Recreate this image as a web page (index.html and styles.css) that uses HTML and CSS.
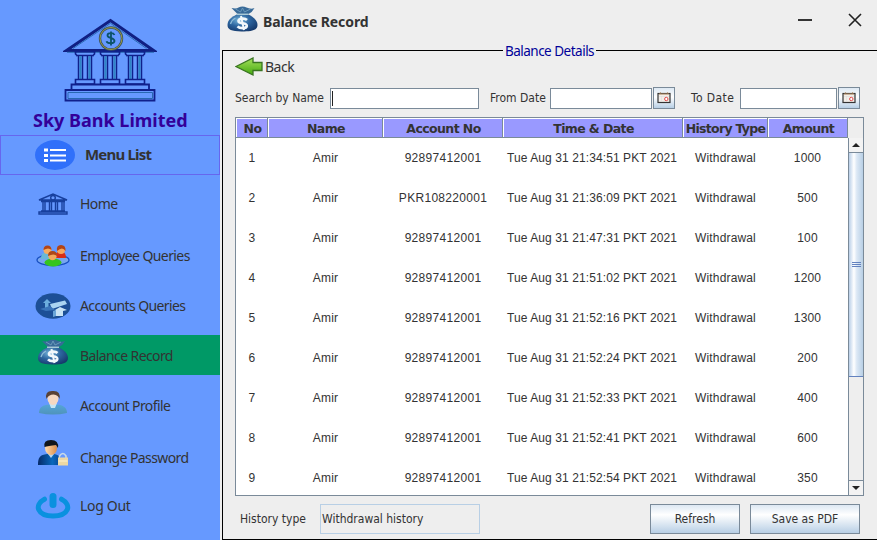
FILE: index.html
```html
<!DOCTYPE html>
<html lang="en">
<head>
<meta charset="utf-8">
<title>Balance Record</title>
<link rel="stylesheet" href="styles.css">
</head>
<body>
<svg width="0" height="0" class="defs" aria-hidden="true">
  <defs>
    <radialGradient id="bag" cx=".4" cy=".35" r=".7"><stop offset="0" stop-color="#79b8dc"/><stop offset=".5" stop-color="#2d659f"/><stop offset="1" stop-color="#163a6c"/></radialGradient>
    <linearGradient id="leaf" x2="0" y2="1"><stop offset="0" stop-color="#a5e05c"/><stop offset="1" stop-color="#43a80f"/></linearGradient>
    <linearGradient id="teal" x2="0" y2="1"><stop offset="0" stop-color="#55a5d8"/><stop offset="1" stop-color="#4f93ba"/></linearGradient>
    <linearGradient id="navy"><stop offset="0" stop-color="#062a69"/><stop offset=".6" stop-color="#0868bc"/><stop offset="1" stop-color="#073e8d"/></linearGradient>
    <linearGradient id="skin"><stop offset="0" stop-color="#ffdcae"/><stop offset="1" stop-color="#d98c48"/></linearGradient>
    <symbol id="moneybag" viewBox="0 0 30 26">
      <path d="M10 8C4 11 0 14 0 19c0 5 4 6 14 6.500 10 0 16-1 16-6.500 0-5-5-8.500-10-11z" fill="url(#bag)"/>
      <path d="M4 2q5 1 7-.5 4-2 8 0 4 2 8 .5-2 4-6 6H10Q7 5 4 2z" fill="#386a98"/>
      <path d="M8 3l5 3 2-4 2 4 6-3" fill="none" stroke="#6f9dbd" stroke-width=".9"/>
      <path d="M9 8.300h12" stroke="#a8c9d6" stroke-width="1.500"/>
      <path d="M19.500 14c-2-2-8-2-8.500.8-.4 3.700 8.800 1.200 8.300 5.200-.5 3-7.300 2.500-9.300.3" fill="none" stroke="#f2f8fc" stroke-width="2.600"/>
      <path d="M13.500 10l3 14" stroke="#f2f8fc" stroke-width="2"/>
      <path d="M3 18q1-4 5-6" fill="none" stroke="#8fbcd8" stroke-width="1.300"/>
    </symbol>
    <symbol id="calendar" viewBox="0 0 14 12">
      <rect x="1" y="1.500" width="12" height="9" fill="#f3eee8" stroke="#333" stroke-width="1.200"/>
      <path d="M2 2h10M3 .8h1M10 .8h1" stroke="#b48d65"/>
      <path d="M2 4.500h10M4.500 4v6" stroke="#ddd" stroke-width=".6"/>
      <circle cx="9.300" cy="7" r="1.700" fill="#fff" stroke="#e34b4b"/>
    </symbol>
    <symbol id="column" viewBox="0 0 22 34" overflow="visible">
      <path d="M.5 .8h21M2 4.500h18M1.500 0v3l2 2M20.500 0v3l-2 2" stroke="#10208c" stroke-width="1.600"/>
      <path d="M4.500 5v23M17.500 5v23M8.500 5v23M13.500 5v23" stroke="#10208c" stroke-width="1.500"/>
      <path d="M6.500 5v23M15.500 5v23" stroke="#2f86c4" stroke-width="2"/>
      <path d="M1.500 28.500h19v4.500h-19z" stroke="#10208c" stroke-width="1.600"/>
    </symbol>
  </defs>
</svg>
<div class="window">
  <nav class="sidebar">
    <svg class="bank" viewBox="0 0 94 86" fill="none" stroke="#10208c" stroke-width="1.800">
      <path d="M3.500 33.500L47.500 3.500l43 30z" stroke="#101f83" stroke-width="3"/>
      <path d="M10 31.500L47.500 6.300l36 25.200M4 35.300h87" stroke="#2b6cb5" stroke-width="1"/>
      <circle cx="48" cy="21.500" r="11" stroke="#3d5360" stroke-width="2.400"/><circle cx="48" cy="21.500" r="11" stroke="#9a9b42" stroke-width="1"/>
      <path d="M51.500 18c-1-2.500-7-2.500-7 .4 0 3 7 2 7 5.500 0 3-7 3-8 .3M48 14.500v14" stroke="#0b5368" stroke-width="1.800"/>
      <use href="#column" x="11" y="34" width="22" height="34"/>
      <use href="#column" x="36" y="34" width="22" height="34"/>
      <use href="#column" x="61" y="34" width="22" height="34"/>
      <path d="M8.500 67.500h77.500V73H8.500zM2.500 73h89v10.500h-89z"/><path d="M5 75.500h84.500v6H5z" stroke="#2868b2" stroke-width="1"/>
    </svg>
    <h1 class="brand"><span>Sky Bank Limited</span></h1>
    <div class="menu-title">
      <svg class="list-icon" viewBox="0 0 40 30"><ellipse cx="20" cy="15" rx="20" ry="15" fill="#3070fa"/><path d="M9 10h4M9 15.500h4M9 20.500h4" stroke="#fff" stroke-width="3"/><path d="M15 10h16M15 15.500h16M15 20.500h16" stroke="#fff" stroke-width="2"/></svg>
      <span>Menu List</span>
    </div>
    <ul class="menu">
      <li><svg class="i-home" viewBox="0 0 30 22" fill="none" stroke="#173f9d" stroke-width="1.400"><path d="M1 7L15 1l14 6zM3 8.500h24"/><circle cx="15" cy="4.800" r="2.300"/><path d="M5 9v9m2-9v9m4.500-9v9m2-9v9m4-9v9m2-9v9m4.500-9v9m2-9v9M3 18h24M1 19h28v2H1z"/></svg><span>Home</span></li>
      <li><svg class="i-team" viewBox="0 0 34 22"><ellipse cx="17" cy="15" rx="16" ry="5.500" fill="#78a6ef" stroke="#174fc0" stroke-width="1.300"/><path d="M5 14c0-6 3-7 7-7s6 2 6 7z" fill="#69b8d8"/><path d="M19 13c0-5 3-7 6-7s5 3 5 7z" fill="#d82e16"/><ellipse cx="17" cy="17.500" rx="8.500" ry="4" fill="#35c51f"/><circle cx="11.500" cy="5" r="4" fill="#f7ac60"/><circle cx="25" cy="5" r="4" fill="#f6a65c"/><path d="M7.500 5q0-4.500 4-4.500t4 4.500q-3-3-8 0zM21 6q-1-6 4-6t4.500 6q-3-5-8.500 0z" fill="#b34416"/><circle cx="16.500" cy="11" r="4.200" fill="#f3aa5d"/><path d="M12 11q0-5 4.500-5t4.500 5q-3-3-9 0z" fill="#ad4819"/></svg><span>Employee Queries</span></li>
      <li><svg class="i-accounts" viewBox="0 0 36 26"><ellipse cx="18" cy="13" rx="17.500" ry="12.800" fill="#1c4f96"/><path d="M8 10l4-4 4 4h-2.500v5H10v-5z" fill="#6caede"/><path d="M15 11l15-3.500 2 3.500-15 5z" fill="#aad4f1"/><path d="M5 16l10-3 5 4-9 1z" fill="#3a75ba"/><path d="M20 17l5-3 7 3-4 1v5h-7z" fill="#c9e3f4"/><path d="M21 17v6l-3 1v-6z" fill="#6ba6d8"/></svg><span>Accounts Queries</span></li>
      <li class="active"><svg class="i-bag"><use href="#moneybag"/></svg><span>Balance Record</span></li>
      <li><svg class="i-user" viewBox="0 0 30 25"><path d="M1 23c0-6 4-8 10-8.500h8c6 .5 10 3 10 8.500q-14 3-28 0z" fill="url(#teal)"/><path d="M11 13h8l-2 5h-4z" fill="#c6e5f4"/><ellipse cx="15" cy="8.500" rx="5.500" ry="6.500" fill="#f5d8c2"/><path d="M8.500 9Q6.500 1 14 1q9-1 7.500 8-1-4-6-4.500-5 0-7 4.500z" fill="#594236"/></svg><span>Account Profile</span></li>
      <li><svg class="i-lock" viewBox="0 0 30 26"><path d="M0 25c0-8 2-10 9-11h7c6 1 8 4 8 11z" fill="url(#navy)"/><path d="M10 14h6l-3 4z" fill="#b7d5f0"/><ellipse cx="13" cy="8" rx="6" ry="7" fill="url(#skin)"/><path d="M6.500 7Q5 0 13 0q8 0 7 8l-2-3Q10 6 6.500 7z" fill="#10151b"/><path d="M21.500 19v-3q3.500-5 6.500 0v3" fill="none" stroke="#c9dae9" stroke-width="1.600"/><rect x="20" y="17.500" width="10" height="8" fill="#edd8a4"/><path d="M20.500 21h9" stroke="#fff2ce"/></svg><span>Change Password</span></li>
      <li><svg class="i-power" viewBox="0 0 36 26" fill="none" stroke="#0a91df" stroke-linecap="round"><path d="M9.500 6.200C-1.500 12 2.500 23 18 23S37.500 12 26.500 6.200" stroke-width="5"/><path d="M18 3.500v8" stroke-width="7"/></svg><span>Log Out</span></li>
    </ul>
  </nav>
  <main class="main">
    <header class="titlebar">
      <svg class="title-bag"><use href="#moneybag"/></svg>
      <h2><span>Balance Record</span></h2>
      <svg class="minimize" viewBox="0 0 14 14"><path d="M0 7h14" stroke="#333" stroke-width="2"/></svg>
      <svg class="close" viewBox="0 0 14 14"><path d="M1 1l12 12M13 1L1 13" stroke="#222" stroke-width="1.600"/></svg>
    </header>
    <fieldset class="panel">
      <legend><span>Balance Details</span></legend>
      <div class="back"><svg viewBox="0 0 28 20"><path d="M1 9.500L18 1v4.500h9v8h-9V18z" fill="url(#leaf)" stroke="#397421" stroke-width="1.300"/></svg><span>Back</span></div>
      <div class="filters">
        <label class="l-search">Search by Name</label><div class="field f-search"><i class="caret"></i></div>
        <label class="l-from">From Date</label><div class="field f-from"></div><button class="cal"><svg><use href="#calendar"/></svg></button>
        <label class="l-to">To Date</label><div class="field f-to"></div><button class="cal"><svg><use href="#calendar"/></svg></button>
      </div>
      <div class="table">
        <div class="grid head"><div>No</div><div>Name</div><div>Account No</div><div>Time &amp; Date</div><div class="tight">History Type</div><div>Amount</div></div>
        <div class="body">
          <div class="rows">
            <div class="grid row"><div>1</div><div>Amir</div><div>92897412001</div><div>Tue Aug 31 21:34:51 PKT 2021</div><div>Withdrawal</div><div>1000</div></div>
            <div class="grid row"><div>2</div><div>Amir</div><div>PKR108220001</div><div>Tue Aug 31 21:36:09 PKT 2021</div><div>Withdrawal</div><div>500</div></div>
            <div class="grid row"><div>3</div><div>Amir</div><div>92897412001</div><div>Tue Aug 31 21:47:31 PKT 2021</div><div>Withdrawal</div><div>100</div></div>
            <div class="grid row"><div>4</div><div>Amir</div><div>92897412001</div><div>Tue Aug 31 21:51:02 PKT 2021</div><div>Withdrawal</div><div>1200</div></div>
            <div class="grid row"><div>5</div><div>Amir</div><div>92897412001</div><div>Tue Aug 31 21:52:16 PKT 2021</div><div>Withdrawal</div><div>1300</div></div>
            <div class="grid row"><div>6</div><div>Amir</div><div>92897412001</div><div>Tue Aug 31 21:52:24 PKT 2021</div><div>Withdrawal</div><div>200</div></div>
            <div class="grid row"><div>7</div><div>Amir</div><div>92897412001</div><div>Tue Aug 31 21:52:33 PKT 2021</div><div>Withdrawal</div><div>400</div></div>
            <div class="grid row"><div>8</div><div>Amir</div><div>92897412001</div><div>Tue Aug 31 21:52:41 PKT 2021</div><div>Withdrawal</div><div>600</div></div>
            <div class="grid row"><div>9</div><div>Amir</div><div>92897412001</div><div>Tue Aug 31 21:52:54 PKT 2021</div><div>Withdrawal</div><div>350</div></div>
          </div>
          <div class="scrollbar">
            <div class="arrow"><svg viewBox="0 0 8 4"><path d="M0 4l4-4 4 4z" fill="#222"/></svg></div>
            <div class="thumb"><i></i><i></i><i></i></div>
            <div class="track"></div>
            <div class="arrow down"><svg viewBox="0 0 8 4"><path d="M0 0l4 4 4-4z" fill="#222"/></svg></div>
          </div>
        </div>
      </div>
      <footer class="footer">
        <label>History type</label><div class="readonly">Withdrawal history</div>
        <button class="btn refresh">Refresh</button><button class="btn save">Save as PDF</button>
      </footer>
    </fieldset>
  </main>
</div>
</body>
</html>
```
FILE: styles.css
```css
* { box-sizing: border-box; }
body { margin: 0; color: #333; font-family: "DejaVu Sans Condensed", "DejaVu Sans", sans-serif; font-stretch: condensed; }
.defs { position: absolute; }
.window { display: flex; width: 877px; height: 540px; overflow: hidden; background: #eee; }
svg { display: block; flex: none; }
span, label { white-space: nowrap; }

.sidebar { width: 220px; flex: none; background: #6699ff; }
.bank { width: 94px; height: 86px; margin: 17px 0 0 63px; }
.brand { margin: 4px 0 0; height: 28px; padding-left: 33px; font: bold 18px/27px "Noto Sans", sans-serif; color: #330099; }
.menu-title { display: flex; align-items: center; height: 40px; border: 1px solid #6666ee; padding-left: 34px; gap: 10px; font: bold 15px/20px "Noto Sans", sans-serif; letter-spacing: -.8px; }
.menu-title span { margin-top: -3px; }
.list-icon { width: 40px; height: 30px; }
.menu { list-style: none; margin: 9px 0 0; padding: 0; }
.menu li { display: grid; grid-template-columns: 35px 1fr; column-gap: 10px; align-items: center; justify-items: center; height: 40px; padding-left: 35px; font: 14px/20px "Noto Sans", sans-serif; letter-spacing: -.6px; }
.menu li span { justify-self: start; }
.menu li:nth-child(2) { margin-top: 12px; }
.menu li:nth-child(3) { margin-top: 10px; }
.menu li:nth-child(4) { margin-top: 9px; }
.menu li:nth-child(5) { margin-top: 11px; }
.menu li:nth-child(6) { margin-top: 12px; }
.menu li:nth-child(7) { margin-top: 8px; letter-spacing: -.3px; }
.menu .active { background: #009966; }
.active span { margin-top: 2px; }
.i-home { width: 30px; height: 22px; }
.i-team { width: 34px; height: 22px; }
.i-accounts, .i-power { width: 36px; height: 26px; }
.i-bag { width: 30px; height: 26px; margin-top: -6px; }
.i-user { width: 30px; height: 25px; margin-top: -8px; }
.i-lock { width: 30px; height: 26px; margin-top: -10px; }

.main { flex: 1; min-width: 0; padding-left: 2px; }
.titlebar { display: flex; align-items: center; height: 42px; padding-left: 5px; }
.title-bag { width: 31px; height: 26px; margin-top: -4px; }
.titlebar h2 { margin: 2px 0 0 5px; flex: 1; font: bold 14px/20px "Noto Sans", sans-serif; letter-spacing: -.1px; }
.minimize { width: 14px; height: 14px; margin: -3px 36px 0 0; }
.close { width: 14px; height: 14px; margin: -3px 15px 0 0; }

.panel { margin: 0; padding: 0 13px 0 12px; border: 1px solid #000; border-right: 0; height: 498px; min-width: 0; }
legend { margin: 0 auto; padding: 0 2px; height: 17px; font: 13.500px/18px "Noto Sans", sans-serif; letter-spacing: -.5px; color: #000099; }
.back { display: flex; align-items: center; height: 15px; gap: 2px; font: 14px/14px "Noto Sans", sans-serif; letter-spacing: -.5px; }
.back svg { width: 28px; height: 20px; }
.filters { display: flex; align-items: center; height: 22px; margin-top: 13px; font-size: 12px; }
.l-search { width: 95px; }
.l-from { width: 60px; margin-left: 11px; }
.l-to { width: 49px; margin-left: 16px; letter-spacing: .4px; }
.field { height: 21px; border: 1px solid #7a8a99; background: #fff; padding: 2px 1px; }
.f-search { width: 149px; }
.f-from { width: 102px; }
.f-to { width: 97px; }
.caret { display: block; width: 1px; height: 15px; background: #222; }
.cal { display: grid; place-items: center; width: 22px; height: 22px; margin: 0 0 0 1px; padding: 0; border: 1px solid #7a8a99; background: linear-gradient(#dde8f3, #fff 45%, #b8cfe5); }
.cal svg { width: 14px; height: 12px; }

.table { width: 629px; height: 379px; margin-top: 8px; border: 1px solid #7a8a99; overflow: hidden; }
.grid { display: grid; grid-template-columns: 32px 115px 120px 180px 85px 80px; }
.head { width: 612px; height: 20px; font: bold 12.500px/21px "DejaVu Sans", sans-serif; letter-spacing: -.6px; }
.head div { background: #9999ff; border: solid #7a8a99; border-width: 0 1px 1px 0; box-shadow: inset 1px 1px #fff; padding-left: 2px; text-align: center; white-space: nowrap; overflow: hidden; }
.head .tight { padding-left: 1px; letter-spacing: -.7px; }
.body { display: flex; height: 357px; background: #fff; }
.rows { width: 612px; flex: none; }
.row { height: 40px; line-height: 40px; font-family: "Liberation Sans", sans-serif; font-size: 12px; text-align: center; white-space: nowrap; letter-spacing: .15px; }
.row div:nth-child(3) { letter-spacing: .3px; }
.row div:nth-child(4) { padding-right: 2px; letter-spacing: .09px; }
.row div:nth-child(6) { padding-right: 1px; }
.scrollbar { display: flex; flex-direction: column; width: 15px; border-left: 1px solid #7a8a99; background: #eee; }
.arrow { display: grid; place-items: center; height: 15px; background: #f3f3f3; border-bottom: 1px solid #7a8a99; }
.arrow svg { width: 8px; height: 4px; }
.down { border-top: 1px solid #7a8a99; border-bottom: 0; }
.thumb { display: flex; flex-direction: column; align-items: center; justify-content: center; gap: 1px; height: 224px; border: solid #6382bf; border-width: 0 0 1px; background: linear-gradient(90deg, #b9cfe8, #fff 35%, #dce8f5 55%, #b8cfe5); }
.thumb i { width: 9px; height: 1px; background: #6382bf; }
.track { flex: 1; }

.footer { display: flex; height: 30px; margin-top: 8px; padding-left: 5px; font-size: 12px; line-height: 30px; }
.footer label { width: 80px; }
.readonly { width: 160px; border: 1px solid #b8cfe5; padding-left: 1px; line-height: 29px; }
.btn { height: 30px; border: 1px solid #7a8a99; background: linear-gradient(#dde8f3, #fff 35%, #b8cfe5); color: #333; font: 12px "DejaVu Sans Condensed", "DejaVu Sans", sans-serif; padding: 0; }
.refresh { width: 90px; margin-left: 170px; }
.save { width: 110px; margin-left: 10px; }
```
